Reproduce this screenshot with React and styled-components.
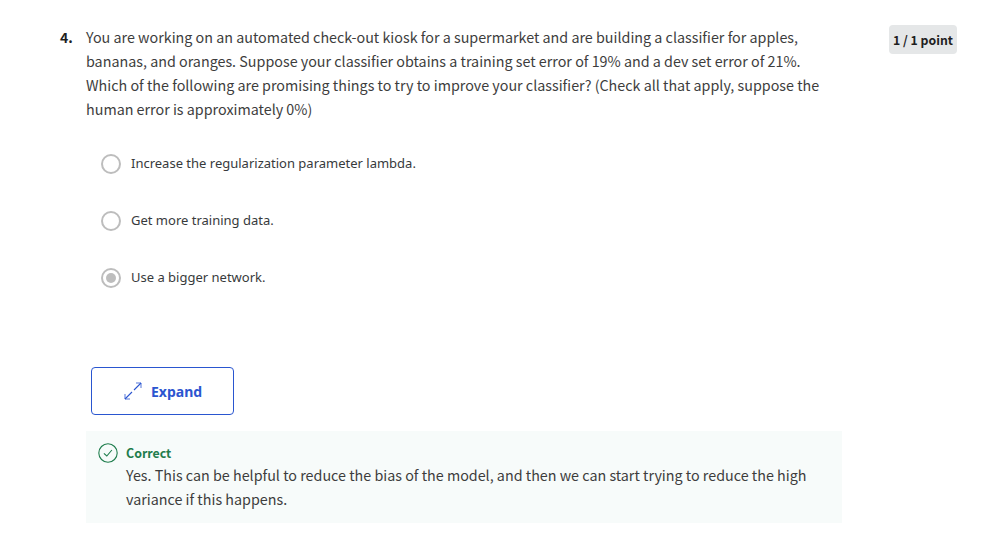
import React from "react";
import styled, { createGlobalStyle } from "styled-components";

const GlobalStyle = createGlobalStyle`
  * { box-sizing: border-box; }
  body {
    margin: 0;
    background: #fff;
    color: #373a3c;
    font-family: "Noto Sans CJK SC", "Noto Sans", sans-serif;
  }
`;

const Question = styled.main`
  display: grid;
  grid-template-columns: 26px 756px auto;
  justify-content: start;
  padding: 25px 0 0 60px;
  height: 543px;
`;

const Number = styled.div`
  font-size: 14px;
  font-weight: 700;
  line-height: 24px;
  color: #1f1f1f;
`;

const Content = styled.div`
  display: flex;
  flex-direction: column;
  align-items: flex-start;
`;

const Prose = styled.p`
  margin: 0;
  font-size: 14.32px;
  line-height: 24px;
  white-space: nowrap;
  color: #3d3d3d;
`;

const Points = styled.div`
  width: 68px;
  height: 29px;
  margin-left: 47px;
  border-radius: 4px;
  background: #e5e7e8;
  color: #1f1f1f;
  font-size: 12.3px;
  font-weight: 700;
  line-height: 30px;
  text-align: center;
  white-space: nowrap;
`;

const Options = styled.div`
  display: flex;
  flex-direction: column;
  gap: 37px;
  margin: 33px 0 0 15px;
`;

const Option = styled.label`
  display: flex;
  align-items: flex-start;
  gap: 10px;
  height: 20px;
  font-family: "Noto Sans", sans-serif;
  font-size: 13px;
  line-height: 18px;
  color: #373a3c;
`;

const Radio = styled.span`
  display: grid;
  place-items: center;
  width: 20px;
  height: 20px;
  border: 2px solid #bdbdbd;
  border-radius: 50%;

  &::after {
    content: "";
    width: 10px;
    height: 10px;
    border-radius: 50%;
    background: ${(p) => (p.$checked ? "#bdbdbd" : "transparent")};
  }
`;

const ExpandButton = styled.button`
  display: flex;
  align-items: center;
  gap: 9px;
  width: 143px;
  height: 48px;
  margin: 79px 0 0 5px;
  padding: 0 0 0 32px;
  border: 1px solid #2a56d0;
  border-radius: 4px;
  background: #fff;
  color: #2b55d0;
  font-family: "Noto Sans", sans-serif;
  font-size: 14px;
  font-weight: 700;
  line-height: 20px;

  svg { display: block; }
`;

const ExpandLabel = styled.span`
  padding-top: 2px;
`;

const Feedback = styled.section`
  display: flex;
  gap: 8px;
  width: 756px;
  height: 92px;
  margin-top: 16px;
  padding: 12px;
  background: #f7fbfa;

  svg { display: block; flex: none; }
`;

const Verdict = styled.div`
  font-size: 12.4px;
  font-weight: 700;
  line-height: 20px;
  color: #1f7d4d;
`;

const options = [
  { text: "Increase the regularization parameter lambda.", checked: false },
  { text: "Get more training data.", checked: false },
  { text: "Use a bigger network.", checked: true },
];

function ExpandIcon() {
  return (
    <svg width="18" height="18" viewBox="0 0 18 18" fill="none" stroke="#2b55d0">
      <path d="M10 8 17 1M8 10 1 17" strokeWidth="1.1" />
      <path d="M12 1H17V6M1 12V17H6" strokeWidth="1" opacity="0.8" />
    </svg>
  );
}

function CheckIcon() {
  return (
    <svg width="20" height="20" viewBox="0 0 20 20" fill="none" stroke="#1f7d4d" strokeWidth="1.1">
      <circle cx="10" cy="10" r="9.2" />
      <path d="M5.9 10.3 8.8 13 13.9 7" />
    </svg>
  );
}

export default function App() {
  return (
    <>
      <GlobalStyle />
      <Question>
        <Number>4.</Number>
        <Content>
          <Prose>
            You are working on an automated check-out kiosk for a supermarket and are building a classifier for apples,
            <br />
            bananas, and oranges. Suppose your classifier obtains a training set error of 19% and a dev set error of 21%.
            <br />
            Which of the following are promising things to try to improve your classifier? (Check all that apply, suppose the
            <br />
            human error is approximately 0%)
          </Prose>
          <Options>
            {options.map((o) => (
              <Option key={o.text}>
                <Radio $checked={o.checked} />
                {o.text}
              </Option>
            ))}
          </Options>
          <ExpandButton>
            <ExpandIcon />
            <ExpandLabel>Expand</ExpandLabel>
          </ExpandButton>
          <Feedback>
            <CheckIcon />
            <div>
              <Verdict>Correct</Verdict>
              <Prose>
                Yes. This can be helpful to reduce the bias of the model, and then we can start trying to reduce the high
                <br />
                variance if this happens.
              </Prose>
            </div>
          </Feedback>
        </Content>
        <Points>1 / 1 point</Points>
      </Question>
    </>
  );
}
